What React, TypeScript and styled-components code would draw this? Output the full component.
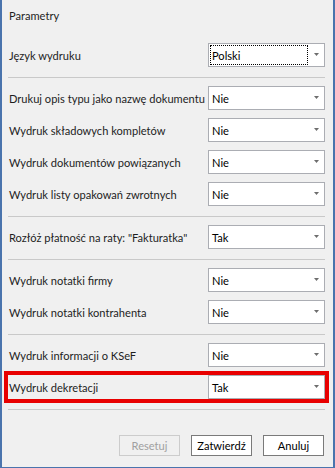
import styled, { createGlobalStyle } from "styled-components";

const GlobalStyle = createGlobalStyle`
    html, body {
        margin: 0;
        padding: 0;
        background: #f0f0f0;
    }
    body {
        font-family: Lato, "Open Sans", sans-serif;
        font-size: 11.1px;
        color: #1e1e1e;
    }
`

const Window = styled.div`
    width: 335px;
    height: 468px;
    box-sizing: border-box;
    border: solid #4a74ad;
    border-width: 0 2px 1px 2px;
    background: #f0f0f0;
    padding: 0 8px 0 6px;
    display: flex;
    flex-direction: column;
`

const Title = styled.div`
    padding-top: 8px;
    padding-left: 1px;
    line-height: 16px;
    margin-bottom: 19px;
`

const Group = styled.div`
    display: flex;
    flex-direction: column;
    gap: 8px;
`

const Row = styled.div<{ $highlight?: boolean }>`
    display: flex;
    align-items: center;
    justify-content: space-between;
    height: 24px;
    outline: ${p => p.$highlight ? "4px solid #e80000" : "none"};
`

const Label = styled.span`
    padding-left: 1px;
    white-space: nowrap;
`

const Select = styled.div`
    position: relative;
    flex-shrink: 0;
    width: 117px;
    height: 24px;
    box-sizing: border-box;
    border: 1px solid #abadb3;
    background: #fff;
    display: flex;
    align-items: center;
    padding-left: 3px;
    color: #000;
`

const Focus = styled.span`
    position: absolute;
    left: 1px;
    top: 1px;
    bottom: 1px;
    right: 16px;
    border: 1px dotted #000;
`

const Arrow = styled.svg`
    position: absolute;
    right: 5px;
    top: 50%;
    margin-top: -2px;
`

const Separator = styled.div`
    height: 1px;
    background: #c9c9c9;
    margin: 10px 0 8px;
`

const Footer = styled.div`
    display: flex;
    justify-content: flex-end;
    gap: 11px;
    padding-top: 17px;
    padding-right: 1px;
`

const Button = styled.button<{ $disabled?: boolean }>`
    width: 61px;
    height: 21px;
    box-sizing: border-box;
    padding: 0;
    font: inherit;
    background: ${p => p.$disabled ? "#f0f0f0" : "#fff"};
    border: 1px solid ${p => p.$disabled ? "#cccccc" : "#7a7a7a"};
    color: ${p => p.$disabled ? "#a0a0a0" : "#000"};
`

const Dropdown = ({ value, focused }: { value: string; focused?: boolean }) => (
    <Select>
        {focused && <Focus />}
        {value}
        <Arrow width="5" height="3" viewBox="0 0 5 3">
            <path d="M0 0H5L2.5 3Z" fill="#6d6d6d" />
        </Arrow>
    </Select>
)

const Param = ({ label, value, focused, highlight }: { label: string; value: string; focused?: boolean; highlight?: boolean }) => (
    <Row $highlight={highlight}>
        <Label>{label}</Label>
        <Dropdown value={value} focused={focused} />
    </Row>
)

const App = () => {
    return (
        <>
            <GlobalStyle />
            <Window>
                <Title>Parametry</Title>
                <Group>
                    <Param label="Język wydruku" value="Polski" focused />
                </Group>
                <Separator />
                <Group>
                    <Param label="Drukuj opis typu jako nazwę dokumentu" value="Nie" />
                    <Param label="Wydruk składowych kompletów" value="Nie" />
                    <Param label="Wydruk dokumentów powiązanych" value="Nie" />
                    <Param label="Wydruk listy opakowań zwrotnych" value="Nie" />
                </Group>
                <Separator />
                <Group>
                    <Param label={"Rozłóż płatność na raty: \"Fakturatka\""} value="Tak" />
                </Group>
                <Separator />
                <Group>
                    <Param label="Wydruk notatki firmy" value="Nie" />
                    <Param label="Wydruk notatki kontrahenta" value="Nie" />
                </Group>
                <Separator />
                <Group>
                    <Param label="Wydruk informacji o KSeF" value="Nie" />
                    <Param label="Wydruk dekretacji" value="Tak" highlight />
                </Group>
                <Separator />
                <Footer>
                    <Button $disabled>Resetuj</Button>
                    <Button>Zatwierdź</Button>
                    <Button>Anuluj</Button>
                </Footer>
            </Window>
        </>
    );
}

export default App;
